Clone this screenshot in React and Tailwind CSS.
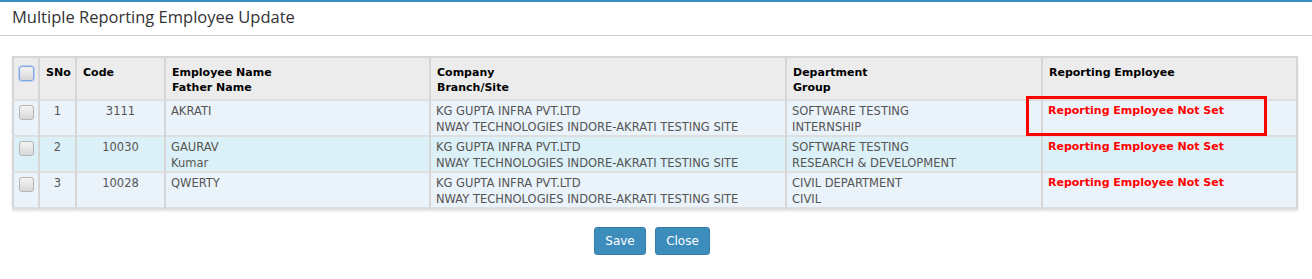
import React from 'react';

const rows = [
  {
    sno: 1,
    code: '3111',
    name: 'AKRATI',
    father: '',
    company: 'KG GUPTA INFRA PVT.LTD',
    branch: 'NWAY TECHNOLOGIES INDORE-AKRATI TESTING SITE',
    dept: 'SOFTWARE TESTING',
    group: 'INTERNSHIP',
    bg: 'bg-[#eaf2fa]',
  },
  {
    sno: 2,
    code: '10030',
    name: 'GAURAV',
    father: 'Kumar',
    company: 'KG GUPTA INFRA PVT.LTD',
    branch: 'NWAY TECHNOLOGIES INDORE-AKRATI TESTING SITE',
    dept: 'SOFTWARE TESTING',
    group: 'RESEARCH & DEVELOPMENT',
    bg: 'bg-[#dcf0f7]',
  },
  {
    sno: 3,
    code: '10028',
    name: 'QWERTY',
    father: '',
    company: 'KG GUPTA INFRA PVT.LTD',
    branch: 'NWAY TECHNOLOGIES INDORE-AKRATI TESTING SITE',
    dept: 'CIVIL DEPARTMENT',
    group: 'CIVIL',
    bg: 'bg-[#eaf2fa]',
  },
];

const Check = ({ focus }) => (
  <span
    className={`block w-[15px] h-[15px] rounded-[3px] bg-gradient-to-b from-[#f4f4f4] to-[#d8d8d8] border ${
      focus ? 'border-[#7ea6e0] shadow-[0_0_0_1px_#b9d0f0]' : 'border-[#b5b5b5]'
    }`}
  />
);

const th = 'text-left align-top font-bold text-[11px] text-black px-[6px] pt-[7px] pb-[4px] border-r-2 border-[#d6d6d6] leading-[15px]';
const td = 'align-top px-[5px] pt-[2px] pb-0 border-r-2 border-[#d6d6d6] leading-[16px]';

export default function App() {
  return (
    <div className="w-[1312px] h-[279px] bg-white relative" style={{ fontFamily: '"DejaVu Sans", Verdana, sans-serif' }}>
      <div className="border-t-2 border-[#3c8dbc] border-b border-b-[#cfcfcf] h-[36px] pl-[12px] pt-[4px]">
        <h1 className="text-[16.5px] leading-[22px] text-[#333]" style={{ fontFamily: '"Open Sans", sans-serif' }}>
          Multiple Reporting Employee Update
        </h1>
      </div>

      <div className="pt-[20px] pl-[12px]">
        <table className="table-fixed border-collapse w-[1286px] text-[11.5px] text-[#555] border-2 border-[#d6d6d6] shadow-[0_2px_2px_rgba(0,0,0,0.12)]">
          <colgroup>
            <col className="w-[26px]" />
            <col className="w-[37px]" />
            <col className="w-[89px]" />
            <col className="w-[265px]" />
            <col className="w-[356px]" />
            <col className="w-[256px]" />
            <col />
          </colgroup>
          <thead>
            <tr className="bg-[#ececec] h-[43px] border-b-2 border-[#dedede]">
              <th className="align-top pt-[8px] pl-[5px] border-r-2 border-[#d6d6d6]">
                <Check focus />
              </th>
              <th className={th}>SNo</th>
              <th className={th}>Code</th>
              <th className={th}>
                Employee Name
                <br />
                Father Name
              </th>
              <th className={th}>
                Company
                <br />
                Branch/Site
              </th>
              <th className={th}>
                Department
                <br />
                Group
              </th>
              <th className={th}>Reporting Employee</th>
            </tr>
          </thead>
          <tbody>
            {rows.map((r) => (
              <tr key={r.sno} className={`${r.bg} h-[36px] border-b-2 border-[#dedede]`}>
                <td className="align-top pt-[4px] pl-[5px] border-r-2 border-[#d6d6d6]">
                  <Check />
                </td>
                <td className={`${td} text-center`}>{r.sno}</td>
                <td className={`${td} text-center`}>{r.code}</td>
                <td className={td}>
                  {r.name}
                  <br />
                  {r.father}
                </td>
                <td className={td}>
                  {r.company}
                  <br />
                  {r.branch}
                </td>
                <td className={td}>
                  {r.dept}
                  <br />
                  {r.group}
                </td>
                <td className={`${td} font-bold text-[11px] text-[#ff0000]`}>Reporting Employee Not Set</td>
              </tr>
            ))}
          </tbody>
        </table>
      </div>

      <div className="flex justify-center gap-[9px] mt-[18px] pr-[8px]">
        <button className="w-[52px] h-[28px] rounded-[3px] bg-[#3c8dbc] border border-[#367fa9] text-white text-[12px]">
          Save
        </button>
        <button className="w-[55px] h-[28px] rounded-[3px] bg-[#3c8dbc] border border-[#367fa9] text-white text-[12px]">
          Close
        </button>
      </div>

      <div className="absolute left-[1026px] top-[96px] w-[241px] h-[40px] border-[3px] border-[#ff0000]" />
    </div>
  );
}
